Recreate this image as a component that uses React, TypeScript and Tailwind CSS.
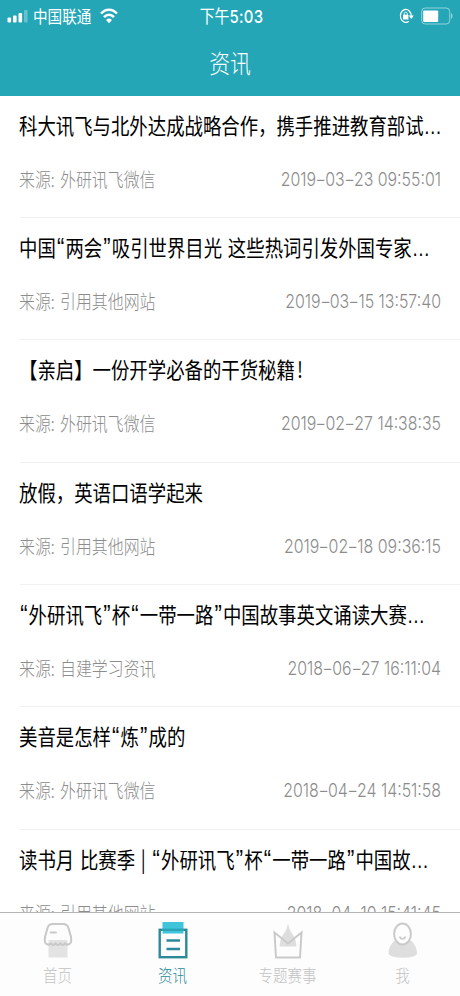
import { Fragment } from "react";

type Article = { title: string; source: string; date: string; height: string };

const articles: Article[] = [
  { title: "科大讯飞与北外达成战略合作，携手推进教育部试…", source: "外研讯飞微信", date: "2019-03-23 09:55:01", height: "h-[122px]" },
  { title: "中国“两会”吸引世界目光 这些热词引发外国专家…", source: "引用其他网站", date: "2019-03-15 13:57:40", height: "h-[122px]" },
  { title: "【亲启】一份开学必备的干货秘籍!", source: "外研讯飞微信", date: "2019-02-27 14:38:35", height: "h-[123px]" },
  { title: "放假，英语口语学起来", source: "引用其他网站", date: "2019-02-18 09:36:15", height: "h-[122px]" },
  { title: "“外研讯飞”杯“一带一路”中国故事英文诵读大赛…", source: "自建学习资讯", date: "2018-06-27 16:11:04", height: "h-[122px]" },
  { title: "美音是怎样“炼”成的", source: "外研讯飞微信", date: "2018-04-24 14:51:58", height: "h-[123px]" },
  { title: "读书月 比赛季 | “外研讯飞”杯“一带一路”中国故…", source: "引用其他网站", date: "2018-04-10 15:41:45", height: "h-[122px]" },
];

function Title({ text }: { text: string }) {
  return (
    <h2 className="h-6 origin-left scale-y-[1.2] whitespace-pre text-[18.4px] leading-6 font-normal text-black [word-spacing:1.6px]">
      {text.split(/([“”…!])/).map((part, i) =>
        part === "“" || part === "”" ? (
          <span key={i} className="inline-block w-[9.6px] text-center font-['Liberation_Sans'] text-[22px] leading-none">{part}</span>
        ) : part === "…" ? (
          <span key={i} className="font-['Liberation_Sans']">{part}</span>
        ) : part === "!" ? (
          <span key={i} className="ml-[2px]">{part}</span>
        ) : (
          <Fragment key={i}>{part}</Fragment>
        ),
      )}
    </h2>
  );
}

function Timestamp({ value }: { value: string }) {
  return (
    <time className="scale-y-[1.2] whitespace-pre font-['Inter']">
      {value.split(/(-)/).map((part, i) =>
        part === "-" ? (
          <span key={i} className="inline-block w-[9.2px] scale-x-150 text-center">{part}</span>
        ) : (
          <Fragment key={i}>{part}</Fragment>
        ),
      )}
    </time>
  );
}

function Row({ article }: { article: Article }) {
  return (
    <li className={`ml-5 shrink-0 border-b border-[#f1f1f1] pt-4 pr-[19px] ${article.height}`}>
      <div className="-ml-px">
        <Title text={article.title} />
        <div className="mt-8 flex h-6 items-center justify-between text-[15.9px] leading-6 font-light text-[#8c8c8c]">
          <span className="scale-y-[1.2] whitespace-pre [word-spacing:1.8px]">来源: {article.source}</span>
          <Timestamp value={article.date} />
        </div>
      </div>
    </li>
  );
}

function StatusBar() {
  return (
    <div className="grid h-8 grid-cols-[1fr_auto_1fr] items-center pr-[7px] pl-[7px] text-white">
      <div className="flex items-center">
        <svg width="21" height="14" viewBox="0 0 21 14" fill="currentColor">
          <rect x="0.5" y="8.5" width="3.6" height="5" rx="1" />
          <rect x="6" y="6.5" width="3.6" height="7" rx="1" />
          <rect x="11.5" y="4" width="3.6" height="9.5" rx="1" />
          <rect x="17" y="1" width="3.6" height="12.5" rx="1" opacity="0.3" />
        </svg>
        <span className="ml-[5px] scale-y-[1.2] text-[14.6px] leading-5">中国联通</span>
        <svg className="ml-[9px]" width="18" height="16" viewBox="0 0 18 16" fill="none" stroke="currentColor" strokeWidth="2.5">
          <path d="M1 5.5C5.7.4 12.3.4 17 5.5" />
          <path d="M4 9.2c3-3.4 7-3.4 10 0" />
          <path d="M9 15.3 6 12q3-2.8 6 0Z" fill="currentColor" stroke="none" />
        </svg>
      </div>
      <span className="ml-[3px] scale-y-[1.2] text-[14.9px] leading-5 font-normal">
        下午<span className="font-['Inter'] font-medium tracking-[0.3px]">5:03</span>
      </span>
      <div className="flex items-center justify-end">
        <svg width="15" height="16" viewBox="0 0 15 16" fill="none" stroke="currentColor">
          <path d="M9.8 13.300A5.400 6.500 0 1 1 12.200 8" strokeWidth="1.3" />
          <path d="M9.800 7.500h5l-2.500 3.500Z" fill="currentColor" stroke="none" />
          <path d="M5.200 7V5.700c0-2 3-2 3 0V7" strokeWidth="1" />
          <rect x="4" y="6.800" width="5.400" height="4.800" rx="0.5" fill="currentColor" stroke="none" />
        </svg>
        <svg className="ml-[7px]" width="32" height="18" viewBox="0 0 32 18">
          <rect x="0.7" y="1" width="28" height="16" rx="3.5" fill="none" stroke="white" strokeOpacity="0.5" />
          <rect x="2.2" y="3.500" width="15" height="11.500" rx="1" fill="white" />
          <path d="M30 6c2 1 2 5 0 6Z" fill="white" opacity="0.5" />
        </svg>
      </div>
    </div>
  );
}

function HomeIcon() {
  return (
    <svg width="32" height="38" viewBox="0 0 32 38" fill="none">
      <rect x="6.500" y="18" width="19" height="17.500" fill="#e3e3e3" />
      <path d="M11 2h10q4.500 0 5.500 4L29 15q1 6.500-2.500 7.500-2 .5-3.500-1-2.300 2.800-4.600 0-2.400 2.800-4.800 0-2.300 2.800-4.600 0-1.500 1.500-3.500 1Q2 21.500 3 15L5.500 6q1-4 5.500-4Z" stroke="#c8c8c8" strokeWidth="2" />
      <path d="M8.500 10.500H14" stroke="#cacaca" strokeWidth="1.800" strokeLinecap="round" />
    </svg>
  );
}

function NewsIcon() {
  return (
    <svg width="32" height="38" viewBox="0 0 32 38" fill="none">
      <rect x="2.700" y="7.800" width="26.600" height="27.400" stroke="#2c8999" strokeWidth="2.400" />
      <rect x="5.500" y="0" width="21" height="11.500" fill="#40c4d9" />
      <path d="M5.500 7.800h21" stroke="#2ca4b6" strokeWidth="2.400" />
      <path d="M9.500 18.500H23M9.500 27H23" stroke="#2c8999" strokeWidth="2.400" />
    </svg>
  );
}

function EventIcon() {
  return (
    <svg width="32" height="38" viewBox="0 0 32 38" fill="none">
      <path d="M16 1Q17 8 20.500 12 24 17 24.500 24.500H7.500Q8 17 11.500 12 15 8 16 1Z" fill="#dedede" />
      <path d="M2.500 10.500 16 21.500 29.500 10.500 28 35.500H4Z" stroke="#cacaca" strokeWidth="2" />
    </svg>
  );
}

function MeIcon() {
  return (
    <svg width="32" height="38" viewBox="0 0 32 38" fill="none">
      <path d="M7.500 18.500h16.500q6 5.500 6 13.500-2 3.700-14.200 3.700T1.500 32q0-8 6-13.500Z" fill="#dedede" />
      <ellipse cx="15.500" cy="12" rx="8.400" ry="10.500" fill="#fdfdfd" stroke="#cacaca" strokeWidth="2" />
      <path d="M12.700 14.500q.5 2.300 2.800 2.300t2.800-2.300" stroke="#cacaca" strokeWidth="1.700" />
    </svg>
  );
}

const tabs = [
  { label: "首页", Icon: HomeIcon, color: "text-[#c2c2c2]" },
  { label: "资讯", Icon: NewsIcon, color: "text-[#2c8999]" },
  { label: "专题赛事", Icon: EventIcon, color: "text-[#c2c2c2]" },
  { label: "我", Icon: MeIcon, color: "text-[#c2c2c2]" },
];

export default function App() {
  return (
    <div className="flex h-[996px] w-[460px] flex-col overflow-hidden bg-white font-['Noto_Sans_CJK_SC',sans-serif]">
      <header className="h-24 shrink-0 bg-[#25a6b7] text-white">
        <StatusBar />
        <h1 className="mt-[15.5px] scale-y-[1.2] text-center text-[20.8px] leading-7 font-light">资讯</h1>
      </header>
      <ul className="flex min-h-0 flex-1 flex-col overflow-hidden">
        {articles.map((article) => (
          <Row key={article.date} article={article} />
        ))}
      </ul>
      <nav className="grid h-[84px] shrink-0 grid-cols-4 border-t border-[#b4b4b4] bg-[#fdfdfd]">
        {tabs.map(({ label, Icon, color }) => (
          <div key={label} className={`flex flex-col items-center pt-[9px] ${color}`}>
            <Icon />
            <span className="mt-[5px] scale-y-[1.2] text-[14.5px] leading-5 font-light">{label}</span>
          </div>
        ))}
      </nav>
    </div>
  );
}
